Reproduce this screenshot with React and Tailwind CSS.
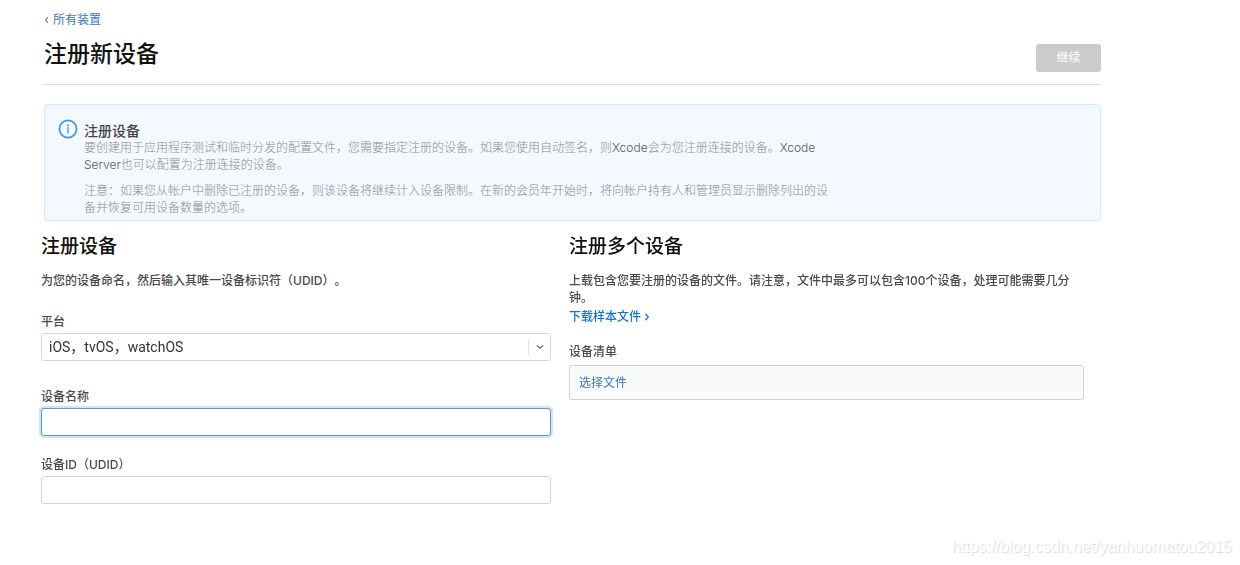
import React from "react";

function InfoIcon() {
  return (
    <svg className="h-5 w-5 shrink-0" viewBox="0 0 20 20" fill="none" aria-hidden="true">
      <circle cx="10" cy="10" r="8.6" stroke="#3f8ef5" strokeWidth="1.6" />
      <circle cx="10" cy="6.3" r="1" fill="#3f8ef5" />
      <path d="M10 8.6V14" stroke="#3f8ef5" strokeWidth="1.3" strokeLinecap="round" />
    </svg>
  );
}

function Chevron({ className, d }) {
  return (
    <svg className={className} viewBox="0 0 6 8" fill="none" stroke="currentColor" strokeWidth="1.3" strokeLinecap="round" strokeLinejoin="round" aria-hidden="true">
      <path d={d} />
    </svg>
  );
}

function TextField({ id, label, className }) {
  return (
    <div className={className}>
      <label htmlFor={id} className="block leading-4">{label}</label>
      <input
        id={id}
        type="text"
        autoFocus={id === "device-name"}
        className="mt-[3px] block h-7 w-full rounded-[3px] border border-[#d6d6d6] bg-white px-2 text-sm outline-none focus:border-[#5f98de] focus:ring-2 focus:ring-[#d3e2f5]"
      />
    </div>
  );
}

export default function App() {
  return (
    <div
      lang="zh-CN"
      className="relative bg-white pt-3 pb-[61px] font-[Inter,'Noto_Sans_CJK_SC',sans-serif] text-xs text-[#494949] [text-spacing-trim:space-all]"
    >
      <div className="pr-[139px] pl-11">
        <a href="#devices" className="inline-flex items-center gap-1 align-top leading-4 text-[#3a78c4]">
          <Chevron className="h-2 w-[5px]" d="M4.3 1.2 1.7 4l2.6 2.8" />
          所有装置
        </a>
        <header className="mt-2 flex items-start justify-between border-b border-[#e0e0e0] pb-3">
          <h1 className="text-[23px] leading-9 font-medium text-[#111]">注册新设备</h1>
          <button type="button" disabled className="mt-2 h-7 w-[65px] rounded-[3px] bg-[#cbcbcb] text-white">
            继续
          </button>
        </header>

        <section className="mt-[19px] flex gap-1.5 rounded-[4px] border border-[#d3e8fa] bg-[#f4f8ff] pt-3.5 pb-1 pl-[13px]">
          <InfoIcon />
          <div className="max-w-[745px] pt-1 leading-[17px] font-light text-[#8b8d91]">
            <h2 className="text-sm leading-4 font-medium text-[#444]">注册设备</h2>
            <p>
              要创建用于应用程序测试和临时分发的配置文件，您需要指定注册的设备。如果您使用自动签名，则<span className="text-[#55585c]">Xcode</span>会为您注册连接的设备。<span className="text-[#55585c]">Xcode Server</span>也可以配置为注册连接的设备。
            </p>
            <p className="mt-[9px]">
              注意：如果您从帐户中删除已注册的设备，则该设备将继续计入设备限制。在新的会员年开始时，将向帐户持有人和管理员显示删除列出的设备并恢复可用设备数量的选项。
            </p>
          </div>
        </section>
      </div>

      <form className="mt-3 grid grid-cols-[510fr_515fr] gap-[18px] pr-[156px] pl-[41px] font-medium">
        <section>
          <h2 className="text-[19px] leading-7 text-[#111]">注册设备</h2>
          <p className="mt-[11px] leading-[17px]">为您的设备命名，然后输入其唯一设备标识符（UDID）。</p>
          <div className="mt-[25px]">
            <label htmlFor="platform" className="block leading-4">平台</label>
            <div className="relative mt-[3px]">
              <select
                id="platform"
                className="block h-7 w-full appearance-none rounded-[3px] border border-[#d6d6d6] bg-white px-[7px] font-[Roboto,'Noto_Sans_CJK_SC',sans-serif] text-sm font-normal text-[#333] outline-none"
              >
                <option>iOS，tvOS，watchOS</option>
              </select>
              <span className="pointer-events-none absolute inset-y-1.5 right-0 flex w-[23px] items-center justify-center border-l border-[#e3e3e3]">
                <svg className="h-2 w-2" viewBox="0 0 8 8" fill="none" stroke="#555" strokeWidth="1.1" strokeLinecap="round" strokeLinejoin="round" aria-hidden="true">
                  <path d="M1.2 2.6 4 5.2l2.8-2.6" />
                </svg>
              </span>
            </div>
          </div>
          <TextField id="device-name" label="设备名称" className="mt-7" />
          <TextField id="device-udid" label="设备ID（UDID）" className="mt-[21px]" />
        </section>

        <section>
          <h2 className="text-[19px] leading-7 text-[#111]">注册多个设备</h2>
          <p className="mt-[11px] leading-[17px]">
            上载包含您要注册的设备的文件。请注意，文件中最多可以包含100个设备，处理可能需要几分钟。
          </p>
          <a href="#sample" className="mt-[3px] flex w-fit items-center gap-[3px] leading-4 text-[#1a6fd0]">
            下载样本文件
            <Chevron className="h-2 w-1.5" d="M1.7 1.2 4.3 4 1.7 6.8" />
          </a>
          <h3 id="list-label" className="mt-[19px] leading-4">设备清单</h3>
          <div className="mt-[5px] flex h-[35px] items-center rounded-[3px] border border-[#d0d2d2] bg-[#f9fbfa] px-[9px]">
            <button type="button" aria-describedby="list-label" className="font-normal text-[#3a78c4]">
              选择文件
            </button>
          </div>
        </section>
      </form>

      <p className="absolute right-2 bottom-2 font-['Liberation_Sans',sans-serif] text-base leading-5 text-white [text-shadow:1px_1px_1px_#d8d8d8]">
        https://blog.csdn.net/yanhuomatou2015
      </p>
    </div>
  );
}
